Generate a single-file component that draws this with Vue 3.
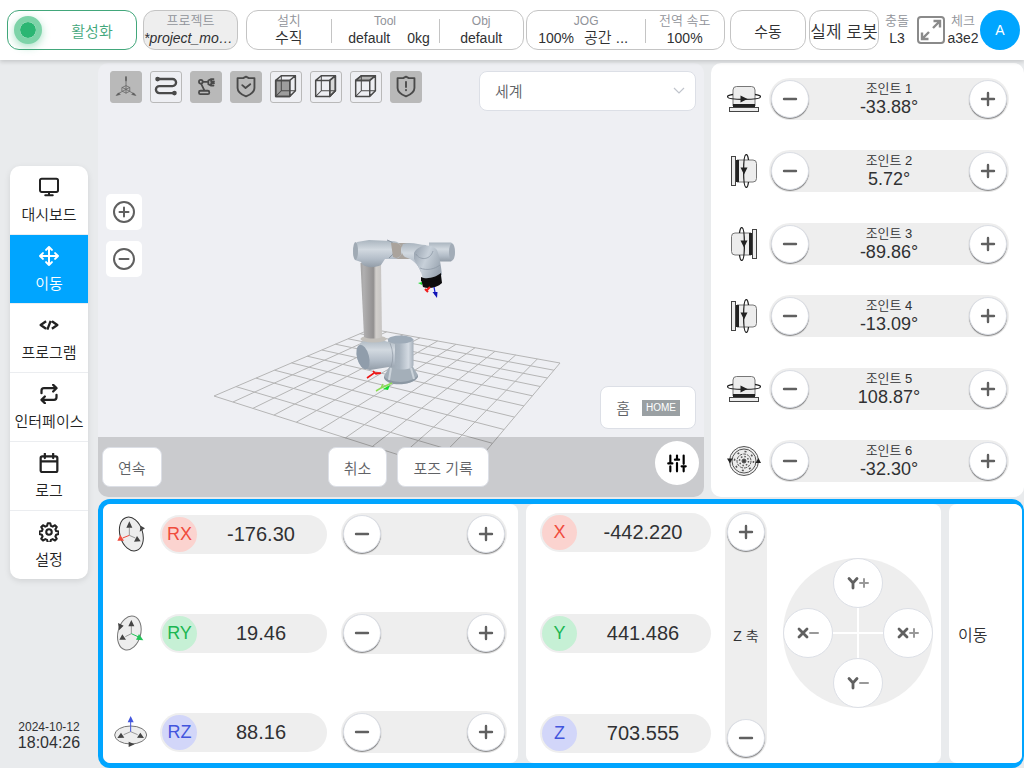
<script setup>
import { ref } from 'vue'

const nav = [
  { id: 'dashboard', label: '대시보드' },
  { id: 'move', label: '이동' },
  { id: 'program', label: '프로그램' },
  { id: 'interface', label: '인터페이스' },
  { id: 'log', label: '로그' },
  { id: 'settings', label: '설정' },
]
const activeNav = ref('move')

const joints = [
  { n: 1, value: '-33.88°', icon: 'up' },
  { n: 2, value: '5.72°', icon: 'right' },
  { n: 3, value: '-89.86°', icon: 'left' },
  { n: 4, value: '-13.09°', icon: 'right' },
  { n: 5, value: '108.87°', icon: 'up' },
  { n: 6, value: '-32.30°', icon: 'flange' },
]

const rotations = ref([
  { axis: 'RX', tone: 'red', value: '-176.30' },
  { axis: 'RY', tone: 'green', value: '19.46' },
  { axis: 'RZ', tone: 'blue', value: '88.16' },
])
const positions = ref([
  { axis: 'X', tone: 'red', value: '-442.220' },
  { axis: 'Y', tone: 'green', value: '441.486' },
  { axis: 'Z', tone: 'blue', value: '703.555' },
])

const tools = [
  { id: 'axes', label: '좌표축', on: true },
  { id: 'path', label: '경로', on: false },
  { id: 'arm', label: '로봇', on: true },
  { id: 'shield', label: '안전', on: true },
  { id: 'front', label: '정면', on: false },
  { id: 'side', label: '측면', on: false },
  { id: 'top', label: '윗면', on: false },
  { id: 'alert', label: '경고', on: true },
]

const MINUS = 'M2 8h12'
const PLUS = 'M2 8h12M8 2v12'

// Perspective floor: maps the unit square onto the four floor corners.
const corners = [[214, 396], [465, 476], [560, 363], [371, 329]]
function project(u, v) {
  const [[x0, y0], [x1, y1], [x2, y2], [x3, y3]] = corners
  const dx1 = x1 - x2, dx2 = x3 - x2, sx = x0 - x1 + x2 - x3
  const dy1 = y1 - y2, dy2 = y3 - y2, sy = y0 - y1 + y2 - y3
  const den = dx1 * dy2 - dx2 * dy1
  const g = (sx * dy2 - dx2 * sy) / den
  const h = (dx1 * sy - sx * dy1) / den
  const w = g * u + h * v + 1
  return [
    ((x1 - x0 + g * x1) * u + (x3 - x0 + h * x3) * v + x0) / w,
    ((y1 - y0 + g * y1) * u + (y3 - y0 + h * y3) * v + y0) / w,
  ].map((n) => n.toFixed(1)).join(' ')
}
let floor = ''
for (let i = 0; i <= 10; i++) {
  const t = i / 10
  floor += `M${project(t, 0)}L${project(t, 1)}M${project(0, t)}L${project(1, t)}`
}
</script>

<template>
  <div class="app">
    <header class="top">
      <button class="active-btn"><span class="lamp"></span><span class="active-text">활성화</span></button>
      <button class="project">
        <span class="sub ko">프로젝트</span>
        <em class="val clip">*project_mo…</em>
      </button>
      <div class="group setup">
        <div class="cell"><span class="sub ko">설치</span><span class="val ko">수직</span></div>
        <div class="cell"><span class="sub">Tool</span><span class="val pair"><span>default</span><span>0kg</span></span></div>
        <div class="cell"><span class="sub">Obj</span><span class="val">default</span></div>
      </div>
      <div class="group jog">
        <div class="cell"><span class="sub">JOG</span><span class="val pair tight"><span>100%</span><span class="ko">공간 ...</span></span></div>
        <div class="cell"><span class="sub ko">전역 속도</span><span class="val">100%</span></div>
      </div>
      <button class="mode">수동</button>
      <button class="mode real">실제 로봇</button>
      <div class="stat collide"><span class="sub ko">충돌</span><span class="val">L3</span></div>
      <button class="full" aria-label="전체 화면">
        <svg viewBox="0 0 28 28" fill="none" stroke="#8a8a8a" stroke-width="2">
          <rect x="1" y="1" width="26" height="26" rx="3" />
          <path stroke-width="2.400" d="M16 12l7-7M16.500 5H23v6.500M12 16l-7 7M11.500 23H5v-6.500" />
        </svg>
      </button>
      <div class="stat check"><span class="sub ko">체크</span><span class="val">a3e2</span></div>
      <button class="avatar">A</button>
    </header>

    <div class="body">
      <aside class="side">
        <nav class="nav">
          <a v-for="item in nav" :key="item.id" href="#" class="nav-item" :class="{ on: activeNav === item.id }" @click.prevent="activeNav = item.id">
            <svg class="nav-icon" viewBox="0 0 24 24" fill="none" stroke="currentColor" stroke-width="2.400" stroke-linecap="round" stroke-linejoin="round">
              <g v-if="item.id === 'dashboard'"><rect x="1.200" y="2" width="21.600" height="16" rx="2" /><path d="M12 18v4M7.500 22h9" /></g>
              <path v-else-if="item.id === 'move'" d="M12 1.200v21.600M1.200 12h21.600M8.500 4.700L12 1.200l3.500 3.500M8.500 19.300l3.500 3.500 3.500-3.500M4.700 8.500L1.200 12l3.500 3.500M19.300 8.500l3.500 3.500-3.500 3.500" />
              <path v-else-if="item.id === 'program'" stroke-width="2.800" stroke-linecap="butt" d="M8.500 7.500L2 12l6.500 4.500M15.500 7.500L22 12l-6.500 4.500M14 7l-4 10.500" />
              <path v-else-if="item.id === 'interface'" stroke-width="2.700" d="M17 1l4 4-4 4M3 11V8a3 3 0 013-3h15M7 23l-4-4 4-4M21 13v3a3 3 0 01-3 3H3" />
              <path v-else-if="item.id === 'log'" stroke-width="2.700" d="M4 4h16a2 2 0 012 2v15a2 2 0 01-2 2H4a2 2 0 01-2-2V6a2 2 0 012-2zM2 10h20M7 1v5M17 1v5" />
              <g v-else stroke-width="2.500">
                <circle cx="12" cy="12" r="3.300" />
                <path d="M10.500 1.500h3l.8 3.100 2.100.9 2.800-1.600 2.100 2.100-1.600 2.800.9 2.100 3 .6v3l-3 .8-.9 2.100 1.600 2.700-2.100 2.100-2.800-1.600-2.100.9-.8 3h-3l-.8-3-2.100-.9-2.800 1.600-2.100-2.100 1.600-2.700-.9-2.100-3-.8v-3l3-.6.9-2.100-1.600-2.800 2.100-2.100 2.800 1.600 2.100-.9z" />
              </g>
            </svg>
            <span>{{ item.label }}</span>
          </a>
        </nav>
        <div class="clock"><span>2024-10-12</span><time>18:04:26</time></div>
      </aside>

      <main class="main">
        <section class="view">
          <svg class="scene" viewBox="98 63 606 434" aria-hidden="true">
            <defs>
              <linearGradient id="tube"><stop offset="0" stop-color="#a3a2a2" /><stop offset=".15" stop-color="#b0afb0" /><stop offset=".6" stop-color="#929090" /><stop offset=".72" stop-color="#d2cfcc" /><stop offset="1" stop-color="#c6c4c2" /></linearGradient>
              <linearGradient id="steelV" x2="0" y2="1"><stop offset="0" stop-color="#aab5bf" /><stop offset=".35" stop-color="#d2d9e0" /><stop offset=".7" stop-color="#b3bdc8" /><stop offset="1" stop-color="#939da8" /></linearGradient>
              <linearGradient id="steelH"><stop offset="0" stop-color="#9ba6b1" /><stop offset=".45" stop-color="#a9b4bf" /><stop offset=".8" stop-color="#d3dae2" /><stop offset="1" stop-color="#a5afba" /></linearGradient>
              <linearGradient id="hand" y2=".5"><stop offset="0" stop-color="#929daa" /><stop offset=".5" stop-color="#c7d0d9" /><stop offset="1" stop-color="#9ca7b3" /></linearGradient>
            </defs>
            <path :d="floor" fill="none" stroke="#b5b5b5" stroke-width="1" />
            <!-- base -->
            <path d="M384 376l8-14h18l8 13c0 4-8 9-17 9s-17-4-17-8z" fill="#a4afb9" />
            <path d="M384 376c4 7 27 9 34-1v2c-5 9-31 10-34 1z" fill="#8c98a3" />
            <path d="M391 368l-2 12M411 368l3 11" stroke="#cbd3da" stroke-width="2" />
            <path d="M388 339h25.500v26c0 6-23 6-23 0z" fill="url(#steelH)" />
            <ellipse cx="400.500" cy="339.500" rx="12.500" ry="4" fill="#9eabb8" />
            <!-- shoulder -->
            <path d="M358 347c2-5 7-8 15-8l12 2 10 3v22l-25 4c-7-1-12-7-13-13z" fill="url(#steelV)" />
            <ellipse cx="363" cy="357" rx="6" ry="12.500" transform="rotate(-15 363 357)" fill="#909dab" />
            <path d="M390 343q5 12 1 24" fill="none" stroke="#8f9aa5" stroke-width=".7" />
            <ellipse cx="373.500" cy="339" rx="13" ry="3.500" fill="#c3c0bb" />
            <!-- upper link -->
            <path d="M360.500 263h20.500l1 74c-4 2-14 2-18 0z" fill="url(#tube)" />
            <!-- elbow -->
            <path d="M393 243h17v16h-17z" fill="#aaa49e" />
            <path d="M357 242l12-2 22 1c9 0 11 5 11 10s-3 8-9 8h-8l-4 6c-6 3-15 3-19-1l-1-2-6-2c-3-6-2-14 2-18z" fill="url(#steelV)" />
            <ellipse cx="355.500" cy="251" rx="2.500" ry="9" fill="#a0aab4" />
            <path d="M387 240q9 3 8 9t-6 9" fill="none" stroke="#87929e" stroke-width="1" />
            <path d="M391 243c4-1 9 0 10 3v9c-3 4-6 3-8 2z" fill="#aaa39c" />
            <!-- wrist -->
            <path d="M429 242.500h22c4 2 5 16 0 19h-22z" fill="url(#steelV)" />
            <ellipse cx="452" cy="252" rx="3" ry="8.500" fill="#a2acb7" />
            <path d="M403 244c8-3 16 1 23 1l9 19-14 8c-3-8-9-13-16-15-4-3-4-9-2-13z" fill="url(#steelV)" />
            <path d="M414 253c4-9 18-10 23-3 3 8 4 16 5 25l-19 5c-1-9-6-15-9-21z" fill="url(#hand)" />
            <path d="M416 254c3 6 14 7 17-3M420 268c7 3 15 1 20-3" fill="none" stroke="#8995a2" stroke-width=".7" />
            <path d="M421 279c6 4 15 1 20-4l1 8c-5 5-14 6-19 4z" fill="#0c0c0d" />
            <path d="M421 277c6 3 15 0 20-4v4c-5 5-14 6-20 4z" fill="#0c0c0d" />
            <!-- tool frame -->
            <path d="M434 287l1.500 8" stroke="#1721d8" stroke-width="1.300" /><path d="M432.500 292h5l-.5 6z" fill="#1013b5" />
            <path d="M430 287l-4 4M425 289l3 3" stroke="#ef1c1c" stroke-width="2" /><path d="M418 283l4-1v3z" fill="#20dc30" />
            <!-- base frame -->
            <path d="M367 378l7-5 7 0M373 371l3 3 5-1" fill="none" stroke="#ed1515" stroke-width="1.600" />
            <path d="M376 391l5-3 2-4M381 388l11-5" fill="none" stroke="#8add54" stroke-width="1.500" /><path d="M383 389l7-4-2 5z" fill="#10df29" />
          </svg>

          <div class="toolbar">
            <button v-for="t in tools" :key="t.id" class="tool" :class="{ on: t.on }" :aria-label="t.label">
              <svg viewBox="0 0 32 32" fill="none" stroke="#4a4a4a" stroke-width="2" stroke-linejoin="round" stroke-linecap="round">
                <g v-if="t.id === 'axes'" stroke="#6a6a6a" stroke-width=".9">
                  <path d="M16 7v12M16 18.500l-9 5M16 18.500l9 5" /><path d="M12 16.500l4-2 4 2v4l-4 2-4-2zM12 16.500l4 2 4-2M16 18.500v4" />
                  <path d="M15.500 9V5h1v4zM8 22.500l-2.500 2.500 4-1zM24 22.500l2.500 2.500-4-1z" fill="#4a4a4a" />
                </g>
                <g v-else-if="t.id === 'path'">
                  <path d="M7 7.500h16a3.600 3.600 0 010 7.500H9a3.600 3.600 0 000 7.500h15" stroke-width="2.500" /><circle cx="7" cy="7.500" r="1.500" fill="#4a4a4a" /><circle cx="25" cy="22.500" r="1.500" fill="#4a4a4a" />
                </g>
                <g v-else-if="t.id === 'arm'" stroke-width="1.900">
                  <rect x="8.500" y="20" width="11" height="3.500" rx="1.500" /><circle cx="10.500" cy="10.500" r="2" /><path d="M11 13l3 6M12.500 10.500H17M24 7.500h-2.500L18.500 9v4l3 1.500H24M21.500 7.500V10h3M21.500 14.500V12h3" />
                </g>
                <g v-else-if="t.id === 'shield' || t.id === 'alert'">
                  <path d="M16 5l3 1.500h6V17c0 4-4 7-9 9-5-2-9-5-9-9V6.500h6z" />
                  <path v-if="t.id === 'shield'" d="M12 14l3.500 3 5-4" /><path v-else d="M16 10.500v5.500M16 19v.5" />
                </g>
                <g v-else stroke-width="1.600">
                  <path v-if="t.id === 'front'" d="M5 9h15v17H5z" fill="#9d9d9d" />
                  <path v-if="t.id === 'side'" d="M20 9l6-5v16l-6 6z" fill="#d9d9d9" />
                  <path v-if="t.id === 'top'" d="M5 9l6-5h15l-6 5z" fill="#b5b5b5" />
                  <path d="M5 9h15v17H5zM5 9l6-5h15v16l-6 6M20 9l6-5" /><path stroke-width="1.100" d="M11 4v16h15M11 20l-6 6" />
                </g>
              </svg>
            </button>
            <div class="pick">
              <select aria-label="기준 좌표계"><option>세계</option></select>
              <svg viewBox="0 0 12 8" fill="none" stroke="#c0c4cc" stroke-width="1.200"><path d="M1 1l5 5 5-5" /></svg>
            </div>
          </div>
          <div class="zooms">
            <button aria-label="확대"><svg viewBox="0 0 24 24"><circle cx="12" cy="12" r="10" /><path d="M12 7.500v9M7.500 12h9" /></svg></button>
            <button aria-label="축소"><svg viewBox="0 0 24 24"><circle cx="12" cy="12" r="10" /><path d="M7.500 12h9" /></svg></button>
          </div>
          <button class="white home">홈 <span class="tag">HOME</span></button>
          <div class="bar">
            <button class="white">연속</button>
            <div class="mid"><button class="white">취소</button><button class="white">포즈 기록</button></div>
            <button class="tune" aria-label="조정">
              <svg viewBox="0 0 24 24" fill="none" stroke="#000" stroke-width="2.600" stroke-linecap="round"><path d="M4 3v9M4 16v6M12 3v5M12 12v10M20 3v10M20 18v4M1.500 12.500h5M9.500 8h5M17.500 16h5" /></svg>
            </button>
          </div>
        </section>

        <section class="joints">
          <div v-for="j in joints" :key="j.n" class="joint">
            <svg class="jicon" :class="j.icon" viewBox="0 0 34 34" fill="none" stroke="#444" stroke-width="1">
              <g v-if="j.icon === 'flange'" stroke="#555">
                <circle cx="17" cy="17" r="14.500" fill="#ededed" /><circle cx="17" cy="17" r="12" /><circle cx="17" cy="17" r="7" stroke-dasharray="3 1" /><circle cx="17" cy="17" r="2" fill="#444" />
                <circle cx="17" cy="17" r="4.500" stroke-width="1.500" stroke-dasharray="1.500 2" /><circle cx="17" cy="17" r="9.500" stroke-width="1.500" stroke-dasharray="2 5.500" />
                <path d="M0 14.500h5.500l-2.500 5zM28.500 19h5.500l-2.500-5z" fill="#222" stroke="none" />
              </g>
              <g v-else>
                <rect x="2.500" y="25.500" width="29" height="4" fill="#ededed" />
                <path d="M6 24v-16q0-3.500 3.500-3.500h15q3.500 0 3.500 3.500v16z" fill="#ededed" stroke="#777" />
                <path d="M6 23.500h22" stroke="#222" stroke-width="3" />
                <path d="M6 12.500c-4 .5-5.500 1.300-5.500 2.200 0 3.600 33 3.600 33 0 0-.9-1.500-1.700-5.500-2.200" stroke="#222" stroke-width="1.300" />
                <path d="M13.500 13.500l7 3.500-7 3.500z" fill="#222" stroke="none" />
              </g>
            </svg>
            <div class="pm">
              <button class="round" aria-label="감소"><svg viewBox="0 0 16 16"><path :d="MINUS" /></svg></button>
              <div class="read"><span class="jname">조인트 {{ j.n }}</span><span class="jval">{{ j.value }}</span></div>
              <button class="round" aria-label="증가"><svg viewBox="0 0 16 16"><path :d="PLUS" /></svg></button>
            </div>
          </div>
        </section>

        <section class="tcp">
          <div class="card rot">
            <div v-for="r in rotations" :key="r.axis" class="rrow">
              <svg v-if="r.axis === 'RX'" class="ricon" viewBox="54 62 102 106" fill="none" stroke="#333" stroke-width="3">
                <ellipse cx="106" cy="115" rx="34" ry="52" transform="rotate(-17 106 115)" fill="#ededed" /><path d="M100 119V96M100 119l18 8" stroke="#999" /><path d="M100 119l-20 8" stroke="#f04b3c" />
                <path d="M100 77l9 19H91zM134 137l-20 1 9-17zM147 98l-16 10 3-18z" fill="#444" stroke="none" /><path d="M64 135l9-17 11 17z" fill="#f04b3c" stroke="none" />
              </svg>
              <svg v-else-if="r.axis === 'RY'" class="ricon" viewBox="54 359 102 106" fill="none" stroke="#777" stroke-width="3">
                <ellipse cx="100" cy="412" rx="34" ry="52" transform="rotate(15 100 412)" fill="#ededed" /><path d="M106 414v-23M106 414l-18 9" stroke="#999" /><path d="M106 414l20 9" stroke="#22c358" />
                <path d="M106 373l9 19H97zM70 432l9-16 11 16zM66 382l17 8-14 14z" fill="#444" stroke="none" /><path d="M120 432l9-17 13 19z" fill="#22c358" stroke="none" />
              </svg>
              <svg v-else class="ricon" viewBox="54 657 102 106" fill="none" stroke="#777" stroke-width="3">
                <ellipse cx="104" cy="719" rx="48" ry="27" fill="#ededed" /><path d="M104 709l-21 9M104 709l21 9" stroke="#999" /><path d="M104 709v-30" stroke="#4255dd" />
                <path d="M64 728l11-16 10 15zM144 728l-11-16-10 15zM98 739l18 8-18 8z" fill="#444" stroke="none" /><path d="M104 662l9 19H95z" fill="#4255dd" stroke="none" />
              </svg>
              <label class="field" :class="r.tone"><span class="badge">{{ r.axis }}</span><input v-model="r.value" type="text" /></label>
              <div class="pm narrow">
                <button class="round" aria-label="감소"><svg viewBox="0 0 16 16"><path :d="MINUS" /></svg></button>
                <button class="round" aria-label="증가"><svg viewBox="0 0 16 16"><path :d="PLUS" /></svg></button>
              </div>
            </div>
          </div>
          <div class="card pos">
            <div class="plist">
              <label v-for="p in positions" :key="p.axis" class="field" :class="p.tone"><span class="badge">{{ p.axis }}</span><input v-model="p.value" type="text" /></label>
            </div>
            <div class="zaxis">
              <button class="round" aria-label="Z 증가"><svg viewBox="0 0 16 16"><path :d="PLUS" /></svg></button>
              <span>Z 축</span>
              <button class="round" aria-label="Z 감소"><svg viewBox="0 0 16 16"><path :d="MINUS" /></svg></button>
            </div>
            <div class="pad">
              <button class="yp" aria-label="Y 증가"><svg viewBox="0 0 24 14"><path class="ltr" d="M3 2.500l4 4.500 4-4.500M7 7v5" /><path class="sgn" d="M14 7h8M18 3v8" /></svg></button>
              <button class="xm" aria-label="X 감소"><svg viewBox="0 0 24 14"><path class="ltr" d="M3 3l8 8M11 3l-8 8" /><path class="sgn" d="M14 7h8" /></svg></button>
              <button class="xp" aria-label="X 증가"><svg viewBox="0 0 24 14"><path class="ltr" d="M3 3l8 8M11 3l-8 8" /><path class="sgn" d="M14 7h8M18 3v8" /></svg></button>
              <button class="ym" aria-label="Y 감소"><svg viewBox="0 0 24 14"><path class="ltr" d="M3 2.500l4 4.500 4-4.500M7 7v5" /><path class="sgn" d="M14 7h8" /></svg></button>
            </div>
          </div>
          <div class="card move">이동</div>
        </section>
      </main>
    </div>
  </div>
</template>

<style>
body { margin: 0; }
</style>

<style scoped>
* { box-sizing: border-box; }
.app {
  display: flex; flex-direction: column; min-height: 100vh; overflow: hidden;
  background: #e9ebed; color: #303133;
  font-family: "Liberation Sans", "Noto Sans CJK KR", sans-serif; font-size: 14px; font-weight: 350;
}
button, input, select { font: inherit; color: inherit; margin: 0; padding: 0; border: 0; background: none; }
button { cursor: pointer; display: flex; align-items: center; justify-content: center; }
svg { display: block; flex: none; }

.top {
  display: flex; align-items: center; height: 60px; padding: 0 4px 0 7px;
  background: #fff; box-shadow: 0 2px 4px rgba(0, 0, 0, .15); position: relative; z-index: 1;
}
.top > * { height: 40px; flex: none; }
.sub { font-size: 12px; line-height: 16px; color: #909399; white-space: nowrap; }
.val { font-size: 14px; line-height: 18px; white-space: nowrap; }
.sub.ko { font-size: 13px; }
.val.ko, .val .ko { font-size: 15px; }
.active-btn { width: 130px; border: 1px solid #42a77b; border-radius: 12px; color: #42a77b; font-size: 15px; justify-content: flex-start; padding-left: 6px; }
.lamp { width: 28px; height: 28px; border-radius: 50%; border: 6px solid #7dd3a8; background: #2bb673; background-clip: padding-box; box-shadow: 0 3px 8px rgba(43, 182, 115, .4); }
.active-text { flex: 1; padding-left: 6px; }
.project { width: 95px; margin-left: 6px; border: 1px solid #c4c4c4; border-radius: 12px; background: #eee; flex-direction: column; overflow: hidden; }
.clip { width: 100%; overflow: hidden; text-align: left; }
.group { display: flex; align-items: center; border: 1px solid #c4c4c4; border-radius: 12px; }
.setup { width: 278px; margin-left: 8px; }
.jog { width: 199px; margin-left: 2px; }
.cell { display: flex; flex-direction: column; align-items: center; flex: 1 1 0; position: relative; }
.cell + .cell::before { content: ""; position: absolute; left: 0; top: 6px; height: 24px; width: 1px; background: #c4c4c4; }
.setup .cell { flex: 84 1 0; }
.setup .cell:nth-child(2) { flex-grow: 109; }
.jog .cell { flex: 119 1 0; }
.jog .cell:nth-child(2) { flex-grow: 79; }
.pair { display: flex; gap: 17px; padding-left: 8px; }
.pair.tight { gap: 10px; padding: 0 6px 0 0; }
.mode { width: 76px; margin-left: 5px; border: 1px solid #c4c4c4; border-radius: 12px; font-size: 15px; }
.mode.real { width: 70px; margin-left: 3px; font-size: 17px; white-space: nowrap; }
.stat { display: flex; flex-direction: column; align-items: center; justify-content: center; }
.collide { width: 36px; }
.full { width: 31px; }
.full svg { width: 28px; height: 28px; }
.check { width: 34px; }
.avatar { width: 40px; border-radius: 50%; background: #00a5ff; color: #fff; }

.body { flex: 1; display: flex; padding-top: 3px; }
.side { width: 98px; flex: none; display: flex; flex-direction: column; align-items: center; justify-content: space-between; padding: 103px 0 16px; }
.nav { width: 78px; background: #fff; border-radius: 10px; overflow: hidden; box-shadow: 0 2px 6px rgba(0, 0, 0, .1); }
.nav-item { display: flex; flex-direction: column; align-items: center; height: 69px; padding-top: 11px; gap: 8px; font-size: 15px; line-height: 20px; color: #222; text-decoration: none; white-space: nowrap; border-bottom: 1px solid #ebedf0; }
.nav-item:last-child { height: 68px; border-bottom: 0; }
.nav-item.on { background: #00a5ff; color: #fff; }
.nav-icon { width: 20px; height: 20px; }
.clock { display: flex; flex-direction: column; align-items: center; font-size: 12px; line-height: 14px; }
.clock time { font-size: 16px; line-height: 18px; }

.main { flex: 1; min-width: 0; display: grid; grid-template-columns: minmax(0, 1fr) 313px; grid-template-rows: 1fr 269px; gap: 2px 7px; }
.view { position: relative; display: flex; flex-direction: column; background: #eeeff3; border-radius: 10px; overflow: hidden; min-height: 434px; }
.scene { position: absolute; inset: 0; width: 100%; height: 100%; }
.toolbar, .zooms, .home, .bar { position: relative; }
.toolbar { display: flex; gap: 8px; padding: 8px 8px 0 12px; }
.tool { width: 32px; height: 32px; border: 1px solid #b9b9b9; border-radius: 3px; }
.tool.on { background: #b9b9b9; }
.tool svg { width: 30px; height: 30px; }
.pick { position: relative; margin-left: auto; width: 217px; }
.pick select { appearance: none; width: 100%; height: 40px; padding: 0 15px; background: #fff; border: 1px solid #dcdfe6; border-radius: 8px; color: #606266; font-size: 15px; }
.pick svg { position: absolute; right: 11px; top: 16px; width: 12px; height: 8px; pointer-events: none; }
.zooms { display: flex; flex-direction: column; gap: 11px; margin: 83px 0 0 8px; align-self: flex-start; }
.zooms button { width: 36px; height: 36px; background: #fff; border-radius: 5px; }
.zooms svg { width: 24px; height: 24px; fill: none; stroke: #606060; stroke-width: 2; stroke-linecap: round; }
.white { height: 40px; padding: 0 15px; background: #fff; border: 1px solid #dcdfe6; border-radius: 8px; color: #606266; font-size: 15px; white-space: nowrap; }
.home { height: 43px; margin: auto 8px 8px auto; gap: 12px; }
.tag { background: #9aa0a3; color: #fff; font-size: 10px; line-height: 16px; padding: 0 4px; }
.bar { display: flex; align-items: flex-end; justify-content: space-between; height: 60px; padding: 0 5px 10px 4px; background: rgba(0, 0, 0, .15); }
.mid { display: flex; gap: 10px; }
.tune { width: 44px; height: 44px; margin-bottom: 2px; border-radius: 50%; background: #fff; }
.tune svg { width: 20px; height: 20px; }

.joints { background: #fff; border-radius: 10px; padding: 15px 15px 15px 16px; display: flex; flex-direction: column; justify-content: space-between; }
.joint { display: flex; align-items: center; gap: 8px; }
.jicon { width: 34px; height: 34px; }
.jicon.right { transform: rotate(90deg); }
.jicon.left { transform: rotate(-90deg) scaleX(-1); }
.pm { flex: 1; display: flex; align-items: center; justify-content: space-between; height: 42px; padding: 0 2px; border-radius: 21px; background: #eee; }
.round { width: 38px; height: 38px; flex: none; border-radius: 50%; background: #fff; border: 1px solid #dcdfe6; box-shadow: 0 1px 1px rgba(0, 0, 0, .45); }
.round svg { width: 16px; height: 16px; fill: none; stroke: #606060; stroke-width: 2.4; stroke-linecap: round; }
.read { display: flex; flex-direction: column; align-items: center; }
.jname { font-size: 13px; line-height: 16px; }
.jval { font-size: 18px; line-height: 20px; }

.tcp { grid-column: 1 / -1; display: flex; gap: 8px; border: 5px solid #00a5ff; border-right-width: 2px; border-radius: 12px; background: #e9ebed; }
.card { background: #fff; border-radius: 8px; }
.rot, .pos { flex: 1 1 0; min-width: 0; }
.rot { display: flex; flex-direction: column; justify-content: space-between; padding: 9px 11px 10px; }
.rrow { display: flex; align-items: center; }
.ricon { width: 34px; height: 36px; margin-right: 12px; }
.field { display: flex; align-items: center; height: 39px; padding: 0 2px; border-radius: 20px; background: #eee; }
.rrow .field { width: 167px; margin-right: 14px; }
.badge { width: 35px; height: 35px; flex: none; border-radius: 50%; display: flex; align-items: center; justify-content: center; font-size: 18px; }
.red .badge { background: #fbd3cf; color: #f04b3c; }
.green .badge { background: #c6f0d5; color: #1cb652; }
.blue .badge { background: #d2d6f9; color: #4255dd; }
.field input { flex: 1; min-width: 0; text-align: center; font-size: 20px; outline: 0; }
.pos { display: flex; align-items: center; padding: 7px 8px 4px 14px; }
.plist { width: 171px; align-self: stretch; display: flex; flex-direction: column; justify-content: space-between; padding: 2px 0 6px; }
.zaxis { width: 42px; align-self: stretch; margin-left: 14px; padding: 2px 0; border-radius: 21px; background: #eee; display: flex; flex-direction: column; align-items: center; justify-content: space-between; font-size: 14px; }
.pad {
  width: 150px; height: 150px; margin: 0 0 4px 16px; border-radius: 50%; flex: none;
  display: grid; grid-template-columns: repeat(3, 50px); grid-template-rows: repeat(3, 50px);
  background: linear-gradient(#fff, #fff) center / 2px 60px no-repeat, linear-gradient(#fff, #fff) center / 60px 2px no-repeat, #eee;
}
.pad button { border-radius: 50%; background: #fff; border: 1px solid #dcdfe6; }
.pad svg { width: 24px; height: 14px; fill: none; stroke-linecap: round; }
.ltr { stroke: #606060; stroke-width: 2.8; }
.sgn { stroke: #999; stroke-width: 2; }
.yp { grid-area: 1 / 2; }
.xm { grid-area: 2 / 1; }
.xp { grid-area: 2 / 3; }
.ym { grid-area: 3 / 2; }
.move { width: 73px; flex: none; display: flex; align-items: center; padding-left: 9px; font-size: 16px; }
</style>
